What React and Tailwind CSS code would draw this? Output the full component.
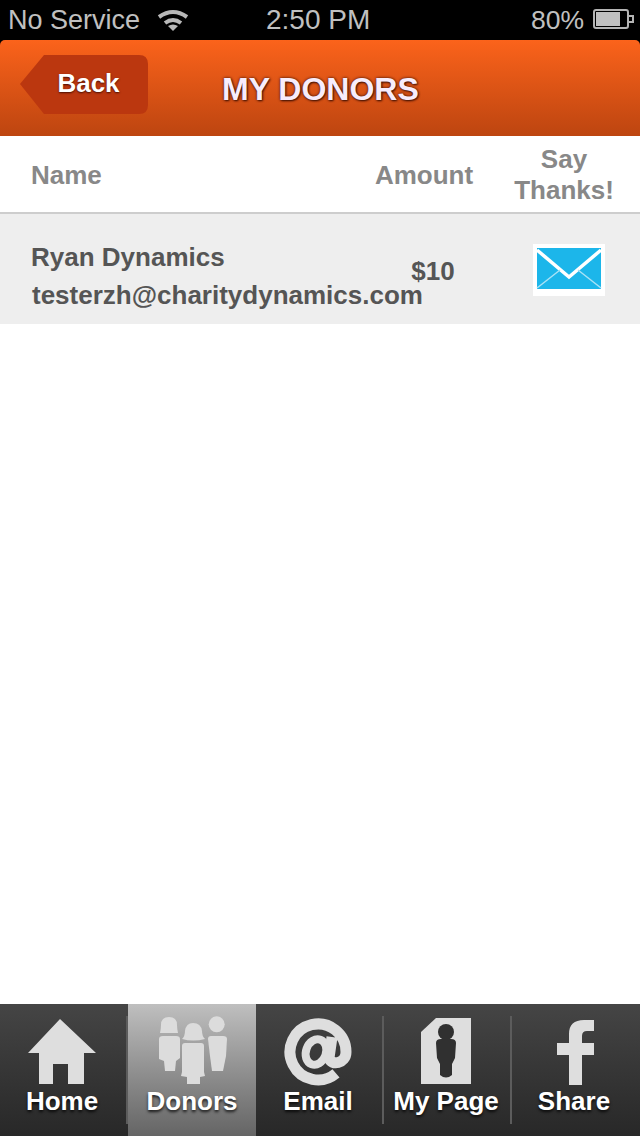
import React from 'react';

const HomeIcon = () => (
  <svg width="70" height="68" viewBox="0 0 70 68" className="block">
    <path d="M33 1 L69 35 L57 35 L57 66 L41 66 L41 46 L26 46 L26 66 L12 66 L12 35 L1 35 Z" fill="#dedede" />
  </svg>
);

const DonorsIcon = () => (
  <svg width="70" height="68" viewBox="0 0 70 68" className="block overflow-visible" fill="#dcdcdc">
    <path d="M3 15 Q4 10 4 7 Q4 -1 12 -1 Q20 -1 20 7 Q20 10 21 15 Z" />
    <path d="M2 21 Q2 18 6 18 L19 18 Q23 18 23 21 L23 40 L19 43 L18 53 L8 53 L7 43 L2 41 Z" />
    <path d="M25 21 Q28 18 28 13 Q29 5 36 5 Q44 5 45 13 Q45 18 48 21 Q36 24 25 21 Z" />
    <path d="M25 28 Q25 25 28 25 L44 25 Q47 25 47 28 L47 54 L48 58 L43 59 L43 66 L30 66 L30 59 L24 58 L25 54 Z" />
    <circle cx="59.7" cy="6.3" r="8" />
    <path d="M51 21 Q51 18 54 18 L66 18 Q70 18 70 21 L69 38 L66 53 L55 53 L53 38 Z" />
  </svg>
);

const EmailIcon = () => (
  <svg width="70" height="68" viewBox="0 0 70 68" className="block" fill="none" stroke="#dedede">
    <path d="M53 55.4 A28 28 0 1 1 63 34 C63 46 48 48 46 40 L49 19" strokeWidth="11" />
    <ellipse cx="33" cy="34" rx="10" ry="13" transform="rotate(20 33 34)" strokeWidth="8" />
  </svg>
);

const MyPageIcon = () => (
  <svg width="52" height="68" viewBox="0 0 52 68" className="block">
    <path d="M15 0 L50 0 L50 66 L0 66 L0 14 Z" fill="#dedede" />
    <circle cx="25" cy="14" r="8" fill="#303030" />
    <path d="M15 25 Q15 21 20 21 L30 21 Q35 21 35 25 L34 40 L31 46 L31 57 Q25 62 19 57 L19 46 L16 40 Z" fill="#303030" />
  </svg>
);

const FacebookIcon = () => (
  <svg width="38" height="66" viewBox="0 0 38 66" className="block">
    <path d="M12 66 L12 36 L0 36 L0 24 L12 24 L12 15 Q12 1 27 1 L37 1 L37 12 L30 12 Q25 12 25 17 L25 24 L37 24 L37 36 L25 36 L25 66 Z" fill="#dedede" />
  </svg>
);

const EnvelopeIcon = () => (
  <svg width="72" height="52" viewBox="0 0 72 52" className="block">
    <rect width="72" height="52" fill="#ffffff" />
    <rect x="4" y="4" width="64" height="41" fill="#1cb6ea" />
    <path d="M4 6 L36 33 L68 6" fill="none" stroke="#ffffff" strokeWidth="3.5" />
    <path d="M4 44 L27 26 M68 44 L45 26" fill="none" stroke="#a8e2f6" strokeWidth="1.5" />
  </svg>
);

const WifiIcon = () => (
  <svg width="32" height="24" viewBox="0 0 32 24" className="block" fill="none" stroke="#b8b8b8" strokeWidth="4">
    <path d="M2 9 Q16 -1 30 9" />
    <path d="M8 15 Q16 9 24 15" />
    <path d="M16 23 L11 18 Q16 15 21 18 Z" fill="#b8b8b8" stroke="none" />
  </svg>
);

const tabs = [
  { label: 'Home', icon: <HomeIcon />, active: false, divider: false, iconClass: '' },
  { label: 'Donors', icon: <DonorsIcon />, active: true, divider: true, iconClass: '' },
  { label: 'Email', icon: <EmailIcon />, active: false, divider: false, iconClass: '' },
  { label: 'My Page', icon: <MyPageIcon />, active: false, divider: true, iconClass: 'ml-[2px]' },
  { label: 'Share', icon: <FacebookIcon />, active: false, divider: true, iconClass: 'ml-1' },
];

const App = () => {
  return (
    <div className="w-[640px] h-[1136px] flex flex-col bg-white overflow-hidden font-['Liberation_Sans',Arial,sans-serif]">
      {/* Status bar */}
      <div className="h-10 shrink-0 bg-black text-[#c0c0c0] text-[27px] leading-10 flex items-center relative">
        <span className="ml-2">No Service</span>
        <span className="ml-[17px] mb-px"><WifiIcon /></span>
        <span className="absolute left-[266px] top-0 text-[28px]">2:50 PM</span>
        <span className="ml-auto text-[26.5px]">80%</span>
        <span className="ml-[9px] mr-[6px] mb-[3px] flex items-center">
          <span className="w-[36px] h-[20px] border-2 border-[#b4b4b4] rounded-[3px] p-px flex">
            <span className="w-[24px] bg-[#c0c0c0]" />
          </span>
          <span className="w-[5px] h-[8px] border-2 border-l-0 border-[#b4b4b4]" />
        </span>
      </div>

      {/* Nav header */}
      <div className="h-24 shrink-0 bg-black">
        <div className="h-24 rounded-t-[5px] bg-gradient-to-b from-[#fb631b] to-[#bd4510] flex items-start pl-5">
          <div className="relative w-[128px] h-[59px] mt-[15px] flex items-center justify-center">
            <svg width="128" height="59" viewBox="0 0 128 59" className="absolute inset-0">
              <path d="M24 0 L119 0 Q128 0 128 9 L128 50 Q128 59 119 59 L24 59 L0 29 Z" fill="#bb370f" />
            </svg>
            <span className="relative text-white text-[26px] font-bold leading-none pl-[9px] pb-[3px] [text-shadow:0_1px_2px_rgba(60,10,0,0.9)]">Back</span>
          </div>
          <h1 className="ml-[74px] mt-[31px] text-[32px] leading-[36px] font-bold text-[#f7ecfb] [text-shadow:0_0_3px_rgba(50,10,0,0.95),1px_1px_2px_rgba(50,10,0,0.8)]">MY DONORS</h1>
        </div>
      </div>

      {/* Table head */}
      <div className="h-[78px] shrink-0 border-b-2 border-[#cdcdcd] pt-1 flex items-center text-[#888888] text-[26px] font-bold leading-[31px]">
        <div className="w-[360px] pl-[31px] pb-[2px]">Name</div>
        <div className="w-[128px] text-center pb-[2px]">Amount</div>
        <div className="w-[152px] text-center pb-[2px]">Say<br />Thanks!</div>
      </div>

      {/* Donor row */}
      <div className="h-[110px] shrink-0 bg-[#eeeeee] flex items-center text-[#555555] text-[26px] font-bold">
        <div className="w-[360px] pl-[31px] pt-[14px] whitespace-nowrap">
          <div className="leading-[38px]">Ryan Dynamics</div>
          <div className="leading-[38px] pl-px">testerzh@charitydynamics.com</div>
        </div>
        <div className="w-[128px] pl-[18px] pt-1 text-center">$10</div>
        <div className="w-[152px] flex justify-center pl-[10px] pt-px"><EnvelopeIcon /></div>
      </div>

      <div className="flex-1" />

      {/* Tab bar */}
      <div className="h-[132px] shrink-0 bg-gradient-to-b from-[#454545] to-[#282828] flex">
        {tabs.map((tab) => (
          <div
            key={tab.label}
            className={`relative w-32 flex flex-col items-center ${tab.active ? 'bg-gradient-to-b from-[#bfbfbf] to-[#656565]' : 'pr-1'}`}
          >
            <div className={`h-[68px] mt-[14px] flex items-center ${tab.iconClass}`}>{tab.icon}</div>
            <span className="-mt-px text-white text-[26px] font-bold leading-[32px] whitespace-nowrap [text-shadow:0_2px_3px_rgba(0,0,0,0.8)]">{tab.label}</span>
            {tab.divider && <span className="absolute left-[-2px] top-[12px] w-[2px] h-[108px] bg-[#5c5c5c]" />}
          </div>
        ))}
      </div>
    </div>
  );
};

export default App;
